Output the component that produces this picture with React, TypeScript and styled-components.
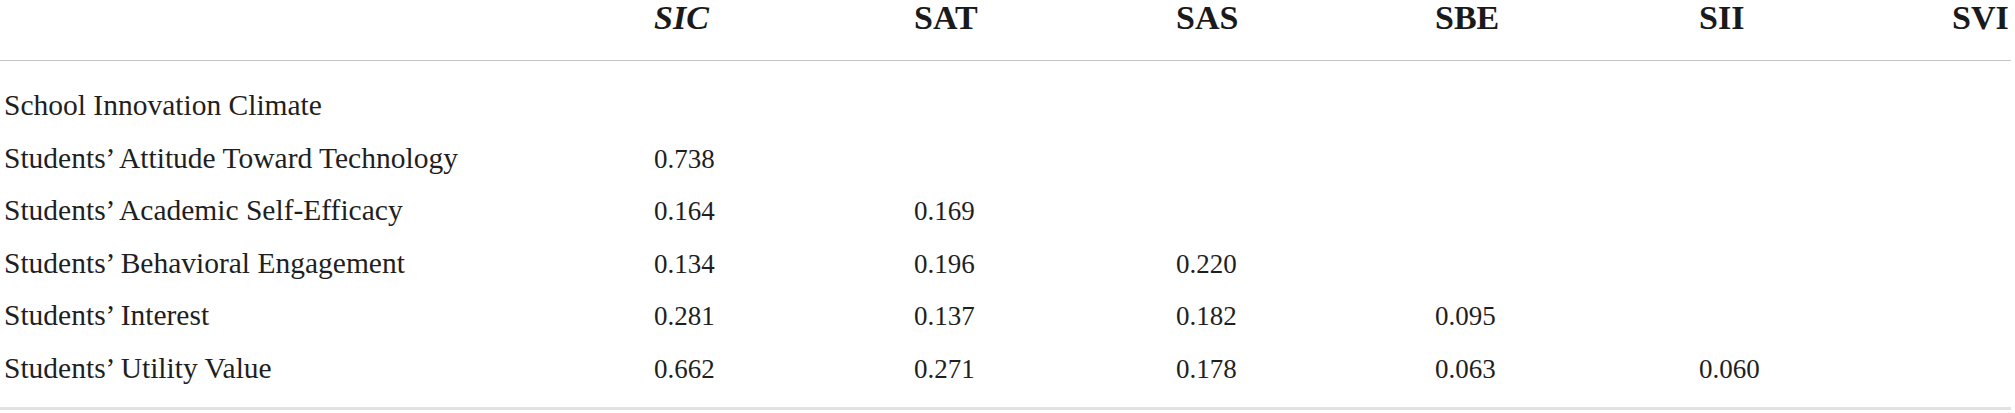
import React from "react";
import styled, { createGlobalStyle } from "styled-components";

const Global = createGlobalStyle`
  html, body { margin: 0; padding: 0; background: #ffffff; }
  body { font-family: "Liberation Serif", "Times New Roman", serif; color: #1f1f1f; }
`;

const COLS = "650px 260px 262px 259px 264px 253px 63px";

const Table = styled.div`
  width: 2011px;
  display: flex;
  flex-direction: column;
  border-bottom: 3px solid #e1e1e1;
`;

const HeaderRow = styled.div`
  display: grid;
  grid-template-columns: ${COLS};
  height: 60px;
  border-bottom: 1px solid #c4c4c4;
  align-items: start;
`;

const HeadCell = styled.div<{ $italic?: boolean }>`
  padding-left: 4px;
  font-family: "Liberation Serif", "Times New Roman", serif;
  font-weight: 700;
  font-size: 34px;
  line-height: 36px;
  font-style: ${(p) => (p.$italic ? "italic" : "normal")};
  color: #1a1a1a;
  white-space: nowrap;
`;

const Body = styled.div`
  display: flex;
  flex-direction: column;
  padding: 18px 0 13px;
`;

const Row = styled.div`
  display: grid;
  grid-template-columns: ${COLS};
  height: 52.5px;
  align-items: center;
`;

const Label = styled.div`
  padding-left: 4px;
  font-family: "Liberation Serif", "Times New Roman", serif;
  font-size: 29.5px;
  line-height: 36px;
  color: #1f1f1f;
  white-space: nowrap;
`;

const Num = styled.div`
  padding-left: 4px;
  padding-top: 2px;
  font-family: "Liberation Serif", "Times New Roman", serif;
  font-size: 27px;
  line-height: 36px;
  color: #1f1f1f;
  white-space: nowrap;
`;

const headers: { text: string; italic?: boolean }[] = [
  { text: "" },
  { text: "SIC", italic: true },
  { text: "SAT" },
  { text: "SAS" },
  { text: "SBE" },
  { text: "SII" },
  { text: "SVI" },
];

const rows: { label: string; values: string[] }[] = [
  { label: "School Innovation Climate", values: [] },
  { label: "Students’ Attitude Toward Technology", values: ["0.738"] },
  { label: "Students’ Academic Self-Efficacy", values: ["0.164", "0.169"] },
  { label: "Students’ Behavioral Engagement", values: ["0.134", "0.196", "0.220"] },
  { label: "Students’ Interest", values: ["0.281", "0.137", "0.182", "0.095"] },
  { label: "Students’ Utility Value", values: ["0.662", "0.271", "0.178", "0.063", "0.060"] },
];

export default function App() {
  return (
    <>
      <Global />
      <Table>
        <HeaderRow>
          {headers.map((h, i) => (
            <HeadCell key={i} $italic={h.italic}>
              {h.text}
            </HeadCell>
          ))}
        </HeaderRow>
        <Body>
          {rows.map((r) => (
            <Row key={r.label}>
              <Label>{r.label}</Label>
              {Array.from({ length: 6 }).map((_, i) => (
                <Num key={i}>{r.values[i] ?? ""}</Num>
              ))}
            </Row>
          ))}
        </Body>
      </Table>
    </>
  );
}
